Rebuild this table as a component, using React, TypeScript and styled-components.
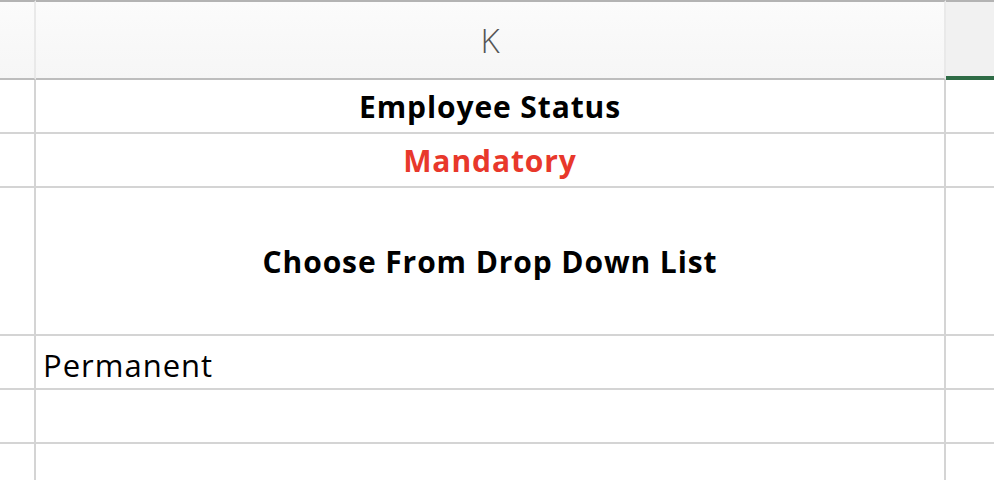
import styled, { createGlobalStyle } from 'styled-components';

const GlobalStyle = createGlobalStyle`
	html, body {
		margin: 0;
		padding: 0;
		background: #ffffff;
	}
	body {
		font-family: 'Open Sans', 'Liberation Sans', sans-serif;
		overflow: hidden;
	}
`;

const Sheet = styled.div`
	width: 994px;
	height: 480px;
	overflow: hidden;
	display: grid;
	grid-template-columns: 36px 910px 1fr;
	grid-template-rows: 80px 54px 54px 148px 54px 54px 54px;
`;

const HeaderCell = styled.div<{ $active?: boolean; $last?: boolean }>`
	box-sizing: border-box;
	border-top: 2px solid #b3b3b3;
	border-bottom: 2px solid #bdbdbd;
	border-right: ${(p) => (p.$last ? 'none' : '2px solid #e9e9e9')};
	background: ${(p) =>
		p.$active
			? '#f1f1f1'
			: 'linear-gradient(180deg, #fbfbfb 0%, #f6f6f6 100%)'};
	display: flex;
	align-items: center;
	justify-content: center;
	font-family: 'Open Sans', sans-serif;
	font-weight: 300;
	font-size: 33px;
	color: #555555;
	position: relative;
	&::after {
		content: '';
		display: ${(p) => (p.$active ? 'block' : 'none')};
		position: absolute;
		left: 0;
		right: 0;
		bottom: -2px;
		height: 4px;
		background: #2f6c46;
	}
`;

const Cell = styled.div<{ $last?: boolean }>`
	box-sizing: border-box;
	border-bottom: 2px solid #d4d4d4;
	border-right: ${(p) => (p.$last ? 'none' : '2px solid #d4d4d4')};
	display: flex;
	align-items: center;
	overflow: hidden;
	white-space: nowrap;
`;

const Title = styled.span<{ $red?: boolean }>`
	width: 100%;
	text-align: center;
	font-family: 'Open Sans', sans-serif;
	font-weight: 700;
	font-size: 30px;
	letter-spacing: 0.9px;
	color: ${(p) => (p.$red ? '#e8382b' : '#000000')};
`;

const Value = styled.span`
	padding-left: 7px;
	padding-top: 5px;
	font-family: 'Open Sans', sans-serif;
	font-size: 31px;
	letter-spacing: 1px;
	color: #000000;
`;

const rows = [
	{ text: 'Employee Status', kind: 'title' },
	{ text: 'Mandatory', kind: 'red' },
	{ text: 'Choose From Drop Down List', kind: 'title' },
	{ text: 'Permanent', kind: 'value' },
	{ text: '', kind: 'value' },
	{ text: '', kind: 'value' },
];

export default function App() {
	return (
		<>
			<GlobalStyle />
			<Sheet>
				<HeaderCell />
				<HeaderCell>K</HeaderCell>
				<HeaderCell $active $last />
				{rows.map((row, i) => [
					<Cell key={`a${i}`} />,
					<Cell key={`k${i}`}>
						{row.kind === 'value' ? (
							<Value>{row.text}</Value>
						) : (
							<Title $red={row.kind === 'red'}>{row.text}</Title>
						)}
					</Cell>,
					<Cell key={`l${i}`} $last />,
				])}
			</Sheet>
		</>
	);
}
